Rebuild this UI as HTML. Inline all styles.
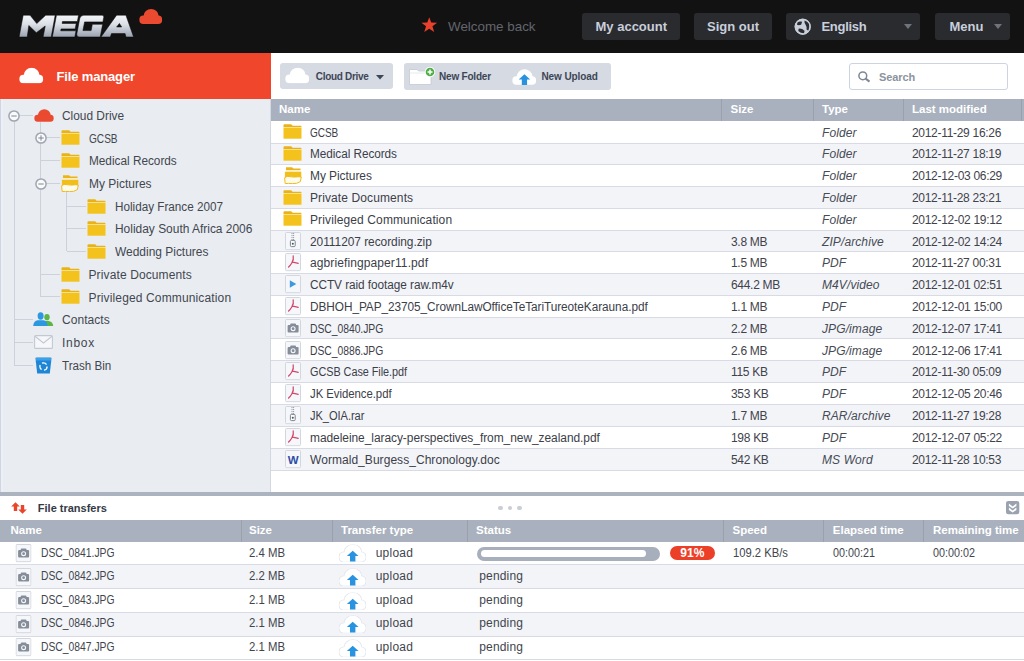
<!DOCTYPE html>
<html><head><meta charset="utf-8">
<style>
html,body{margin:0;padding:0;}
body{width:1024px;height:661px;position:relative;overflow:hidden;background:#ffffff;font-family:"Liberation Sans", sans-serif;}
.a{position:absolute;}
.t{position:absolute;white-space:nowrap;line-height:14px;}
.ic{position:absolute;overflow:visible;}
.row{position:absolute;left:271px;width:753px;}
.sep{position:absolute;left:271px;width:753px;height:1px;background:#d8dbe5;z-index:1;}
.tl{position:absolute;background:#cdd1d9;}
.topbtn{position:absolute;top:12.5px;height:27px;background:#2a2b2f;border-radius:3px;}
.toptext{position:absolute;font-weight:bold;font-size:13px;color:#c8cfdb;line-height:14px;white-space:nowrap;}
.fname{font-size:12px;color:#3b4049;letter-spacing:-0.05px;}
.fsize{font-size:12px;color:#3f434c;letter-spacing:-0.3px;}
.ftype{font-size:12px;color:#464b55;font-style:italic;letter-spacing:0.1px;}
.fdate{font-size:12px;color:#3f434c;letter-spacing:-0.3px;}
.stext{font-size:12px;color:#42474f;}
.hd{position:absolute;font-weight:bold;font-size:11.5px;color:#ffffff;line-height:14px;white-space:nowrap;}
.trtext{font-size:12px;color:#41454d;}
.pbar{position:absolute;width:183px;height:14px;border-radius:7px;background:#a7afbc;}
.pin{position:absolute;left:3.5px;top:3.2px;width:165px;height:7.5px;border-radius:4px;background:#ffffff;}
.badge{position:absolute;width:45.5px;height:14.3px;border-radius:7px;background:#ec3f27;color:#fff;font-weight:bold;font-size:12px;line-height:14.3px;text-align:center;}
</style></head><body>
<svg width="0" height="0" style="position:absolute"><defs>
<linearGradient id="megag" x1="0" y1="0" x2="0" y2="1">
<stop offset="0" stop-color="#f3f5f9"/><stop offset="0.4" stop-color="#dde1e8"/><stop offset="0.7" stop-color="#bcc2cd"/><stop offset="1" stop-color="#9aa2b0"/>
</linearGradient>

<symbol id="folder" viewBox="0 0 19 15">
  <path d="M0.5 1.2 Q0.5 0.3 1.4 0.3 L8.2 0.3 L9.6 1.8 L17.6 1.8 Q18.5 1.8 18.5 2.7 L18.5 3.2 L0.5 3.2 Z" fill="#e9b318"/>
  <rect x="0.5" y="3.1" width="18" height="0.9" fill="#fbe08a"/>
  <rect x="0.5" y="4" width="18" height="10.7" fill="#f3c21d"/>
</symbol>
<symbol id="folderopen" viewBox="0 0 18 17">
  <path d="M2 0.3 H8 L9.5 1.5 H16.5 V3.2 H2 Z" fill="#ebb51a"/>
  <rect x="1.8" y="3.2" width="14.8" height="1.6" fill="#fcf0c4"/>
  <rect x="0.9" y="4.8" width="16.4" height="6" fill="#f1bf1c"/>
  <path d="M0.6 10.8 Q3 8.6 6 9.6 Q9.5 10.4 12.5 9.9 Q15.3 9.4 17.3 10.2 L16.3 14.6 Q13 17 8.5 16.6 Q4 16.2 1.2 16.6 Z" fill="#fffbec" stroke="#efbc1b" stroke-width="1"/>
</symbol>
<symbol id="page" viewBox="0 0 16 19">
  <rect x="0.5" y="0.5" width="15" height="17" rx="1" fill="#f6f7fa" stroke="#d2d6dd" stroke-width="1"/>
  <rect x="0.8" y="17" width="14.4" height="1.2" fill="#d9dde4"/>
</symbol>
<symbol id="cloud" viewBox="0 0 26 17">
  <ellipse cx="13.4" cy="8" rx="8.3" ry="7.6"/><rect x="0.4" y="7.6" width="25.2" height="9.2" rx="4.3"/>
</symbol>

</defs></svg>

<!-- top bar -->
<div class="a" style="left:0;top:0;width:1024px;height:53px;background:#121212"></div>
<svg class="ic" style="left:0;top:0" width="170" height="53" viewBox="0 0 170 53">
  <g fill="url(#megag)" stroke="#060606" stroke-width="0.5">
 <g transform="translate(7.05,0) skewX(-10.75)">
  <path d="M19.1 37 L19 15.2 L25.9 15.2 L34.2 23.6 L41.5 15.2 L51 15.2 L51.2 37 L43.1 37 L43.1 26 L35.5 32.7 L26.6 25.5 L27.2 37 Z"/>
  <path d="M52.3 15.2 H74.4 V21.5 H59.5 V23.4 H73.6 V28.9 H59.5 V30.8 H74.8 V37 H52.3 Z"/>
  <path d="M79.7 15.2 H98 Q100 15.2 100 17.2 V21.9 H81.7 V30.6 H89.9 V24.3 H100.2 V37 H79.7 Q76.2 37 76.2 33.5 V18.7 Q76.2 15.2 79.7 15.2 Z"/>
 </g>
  <path d="M101 37 L116.6 15.2 L125.9 15.2 L133.6 37 L126 37 L125.1 33.6 L111.5 33.6 L110.3 37 Z M116.6 27 L121.7 27 L119.4 23.4 Z" fill-rule="evenodd"/>
 </g>
</svg>
<svg class="ic" style="left:139px;top:7.7px" width="23.5" height="16.8" viewBox="0 0 26 17"><use href="#cloud" fill="#ea4a2f"/></svg>

<svg class="ic" style="left:421.2px;top:16.5px" width="16.5" height="15.5" viewBox="0 0 16 15"><path d="M8 0.3 L9.9 5.4 L15.6 5.5 L11.1 8.9 L12.8 14.6 L8 11.3 L3.2 14.6 L4.9 8.9 L0.4 5.5 L6.1 5.4 Z" fill="#e8412c"/></svg>
<div class="a" style="left:448px;top:19.6px;font-size:13.4px;line-height:14px;color:#62666d;white-space:nowrap">Welcome back</div>

<div class="topbtn" style="left:582px;width:98px"></div>
<div class="toptext" style="left:595.5px;top:19.5px">My account</div>
<div class="topbtn" style="left:693.5px;width:78.5px"></div>
<div class="toptext" style="left:707px;top:19.5px">Sign out</div>
<div class="topbtn" style="left:786px;width:134px"></div>
<svg class="ic" style="left:793.6px;top:17.6px" width="17.4" height="17.4" viewBox="0 0 18 18"><circle cx="9" cy="9" r="8.3" fill="#c8cfda"/><g fill="#2b2c30"><path d="M3.6 4.6 Q6 3 8.4 4 L7.4 6.9 Q5.3 7.8 3.1 7.1 Z"/><path d="M10.8 2.6 Q14 3.2 15.6 6.3 Q16.3 10 14.9 13.2 L13 12 Q13.4 9 12 7.1 Q10.6 5.2 10.8 2.6 Z"/><path d="M4.8 11 Q8.3 10.6 10.9 13.2 L10.4 15.8 Q6.8 15.6 4.4 13.4 Z"/></g><circle cx="9" cy="9" r="7.9" fill="none" stroke="#c8cfda" stroke-width="1"/></svg>
<div class="toptext" style="left:821.5px;top:19.5px;letter-spacing:-0.3px">English</div>
<svg class="ic" style="left:904px;top:24px" width="8" height="5" viewBox="0 0 8 5"><path d="M0 0 L8 0 L4 5 Z" fill="#6e737c"/></svg>
<div class="topbtn" style="left:934.5px;width:75.5px"></div>
<div class="toptext" style="left:949.5px;top:19.5px">Menu</div>
<svg class="ic" style="left:994px;top:24px" width="8" height="5" viewBox="0 0 8 5"><path d="M0 0 L8 0 L4 5 Z" fill="#6e737c"/></svg>

<!-- left header -->
<div class="a" style="left:0;top:53px;width:271px;height:45.5px;background:#ef462c"></div>
<svg class="ic" style="left:18.5px;top:67px" width="24.5" height="17" viewBox="0 0 26 17"><use href="#cloud" fill="#ffffff"/></svg>
<div class="a" style="left:56.5px;top:69.5px;font-weight:bold;font-size:13px;line-height:14px;color:#ffffff;white-space:nowrap;letter-spacing:-0.15px">File manager</div>

<!-- sidebar -->
<div class="a" style="left:0;top:98.5px;width:271px;height:393.5px;background:#e9ecf1"></div>
<div class="a" style="left:0;top:98.5px;width:1px;height:393.5px;background:#d0d5e0"></div><div class="a" style="left:1px;top:98.5px;width:2px;height:393.5px;background:#eceff8"></div>
<div class="a" style="left:270px;top:98.5px;width:1px;height:393.5px;background:#d3d7df"></div>
<div class="tl" style="left:13.5px;top:121.1px;width:1px;height:244.0px"></div>
<div class="tl" style="left:40.0px;top:122.1px;width:1px;height:174.8px"></div>
<div class="tl" style="left:66.1px;top:189.3px;width:1px;height:62.2px"></div>
<div class="tl" style="left:14.0px;top:114.6px;width:19.0px;height:1px"></div>
<svg class="ic" style="left:8.0px;top:109.7px" width="12" height="12" viewBox="0 0 12 12"><circle cx="6" cy="6" r="5.1" fill="#f9fafc" stroke="#9fa6b1" stroke-width="1.5"/><path d="M3.3 6 H8.7" stroke="#7f8692" stroke-width="1"/></svg>
<svg class="ic" style="left:34px;top:108.6px" width="20" height="13" viewBox="0 0 26 17"><use href="#cloud" fill="#ea4a2f"/></svg>
<div class="t stext" style="left:62.0px;top:108.8px;transform:scaleX(0.9905);transform-origin:0 50%;">Cloud Drive</div>
<div class="tl" style="left:40.5px;top:137.3px;width:19.0px;height:1px"></div>
<svg class="ic" style="left:34.5px;top:132.4px" width="12" height="12" viewBox="0 0 12 12"><circle cx="6" cy="6" r="5.1" fill="#f9fafc" stroke="#9fa6b1" stroke-width="1.5"/><path d="M3.3 6 H8.7" stroke="#7f8692" stroke-width="1"/><path d="M6 3.3 V8.7" stroke="#7f8692" stroke-width="1"/></svg>
<svg class="ic" style="left:60.5px;top:130px" width="19" height="15" viewBox="0 0 19 15"><use href="#folder"/></svg>
<div class="t stext" style="left:88.5px;top:131.5px;transform:scaleX(0.8412);transform-origin:0 50%;">GCSB</div>
<div class="tl" style="left:40.5px;top:160.1px;width:19.0px;height:1px"></div>
<svg class="ic" style="left:60.5px;top:153px" width="19" height="15" viewBox="0 0 19 15"><use href="#folder"/></svg>
<div class="t stext" style="left:88.5px;top:154.3px;transform:scaleX(0.9820);transform-origin:0 50%;">Medical Records</div>
<div class="tl" style="left:40.5px;top:182.8px;width:19.0px;height:1px"></div>
<svg class="ic" style="left:34.5px;top:177.9px" width="12" height="12" viewBox="0 0 12 12"><circle cx="6" cy="6" r="5.1" fill="#f9fafc" stroke="#9fa6b1" stroke-width="1.5"/><path d="M3.3 6 H8.7" stroke="#7f8692" stroke-width="1"/></svg>
<svg class="ic" style="left:61.0px;top:175.2px" width="18" height="17" viewBox="0 0 18 17"><use href="#folderopen"/></svg>
<div class="t stext" style="left:88.5px;top:177.0px;transform:scaleX(0.9984);transform-origin:0 50%;">My Pictures</div>
<div class="tl" style="left:66.6px;top:205.5px;width:19.4px;height:1px"></div>
<svg class="ic" style="left:87.0px;top:199px" width="19" height="15" viewBox="0 0 19 15"><use href="#folder"/></svg>
<div class="t stext" style="left:115.0px;top:199.7px;transform:scaleX(0.9757);transform-origin:0 50%;">Holiday France 2007</div>
<div class="tl" style="left:66.6px;top:228.2px;width:19.4px;height:1px"></div>
<svg class="ic" style="left:87.0px;top:221px" width="19" height="15" viewBox="0 0 19 15"><use href="#folder"/></svg>
<div class="t stext" style="left:115.0px;top:222.4px;transform:scaleX(0.9949);transform-origin:0 50%;">Holiday South Africa 2006</div>
<div class="tl" style="left:66.6px;top:251.0px;width:19.4px;height:1px"></div>
<svg class="ic" style="left:87.0px;top:244px" width="19" height="15" viewBox="0 0 19 15"><use href="#folder"/></svg>
<div class="t stext" style="left:115.0px;top:245.2px;transform:scaleX(0.9957);transform-origin:0 50%;">Wedding Pictures</div>
<div class="tl" style="left:40.5px;top:273.7px;width:19.0px;height:1px"></div>
<svg class="ic" style="left:60.5px;top:267px" width="19" height="15" viewBox="0 0 19 15"><use href="#folder"/></svg>
<div class="t stext" style="left:88.5px;top:267.9px;letter-spacing:0.119px;">Private Documents</div>
<div class="tl" style="left:40.5px;top:296.4px;width:19.0px;height:1px"></div>
<svg class="ic" style="left:60.5px;top:289px" width="19" height="15" viewBox="0 0 19 15"><use href="#folder"/></svg>
<div class="t stext" style="left:88.5px;top:290.6px;letter-spacing:0.139px;">Privileged Communication</div>
<div class="tl" style="left:14.0px;top:319.2px;width:19.0px;height:1px"></div>
<svg class="ic" style="left:33px;top:311.7px" width="21" height="14" viewBox="0 0 21 14"><ellipse cx="14" cy="5.2" rx="2.7" ry="3.1" fill="#5cb547"/><path d="M10 13.9 Q10.3 9.6 13 9 L15.5 9 Q19.8 9.6 20.2 13.9 Z" fill="#5cb547"/><ellipse cx="7.6" cy="4" rx="3" ry="3.7" fill="#2b98df"/><path d="M0.2 13.9 Q0.5 8.8 4.8 8.2 L10.4 8.2 Q14.4 8.8 14.6 13.9 Z" fill="#2b98df"/></svg>
<div class="t stext" style="left:62.0px;top:313.4px;letter-spacing:0.043px;">Contacts</div>
<div class="tl" style="left:14.0px;top:341.9px;width:19.0px;height:1px"></div>
<svg class="ic" style="left:34px;top:335.4px" width="19" height="14" viewBox="0 0 19 14"><rect x="0.6" y="0.6" width="17.8" height="12.8" rx="1" fill="#f6f7fa" stroke="#c3c9d3" stroke-width="1.1"/><path d="M1 1.2 L9.5 8 L18 1.2" fill="none" stroke="#c3c9d3" stroke-width="1.1"/></svg>
<div class="t stext" style="left:62.0px;top:336.1px;letter-spacing:0.700px;">Inbox</div>
<div class="tl" style="left:14.0px;top:364.6px;width:19.0px;height:1px"></div>
<svg class="ic" style="left:35px;top:356.8px" width="17" height="17" viewBox="0 0 17 17"><path d="M0.5 1.5 Q0.5 0.5 1.5 0.5 L15.5 0.5 Q16.5 0.5 16.5 1.5 L14.8 16.5 L2.2 16.5 Z" fill="#1f86d6"/><rect x="1" y="1" width="15" height="2.5" fill="#3aa0ea"/><circle cx="8.5" cy="9.5" r="3.6" fill="none" stroke="#ffffff" stroke-width="1.3" stroke-dasharray="5 2.5"/></svg>
<div class="t stext" style="left:62.0px;top:358.8px;transform:scaleX(0.9686);transform-origin:0 50%;">Trash Bin</div>

<!-- toolbar -->
<div class="a" style="left:280px;top:63px;width:113px;height:26px;background:#d5dae3;border-radius:3px"></div>
<svg class="ic" style="left:284.8px;top:67.2px" width="24.5" height="16.8" viewBox="0 0 26 17"><use href="#cloud" fill="#ffffff"/></svg>
<div class="a" style="left:315.8px;top:71.2px;font-weight:bold;font-size:10px;line-height:12px;color:#3d4656;white-space:nowrap;letter-spacing:-0.3px">Cloud Drive</div>
<svg class="ic" style="left:376.3px;top:74.8px" width="8" height="4.5" viewBox="0 0 8 4.5"><path d="M0 0 L8 0 L4 4.5 Z" fill="#3d4656"/></svg>

<div class="a" style="left:403.5px;top:63px;width:207.5px;height:26.5px;background:#d5dae3;border-radius:3px"></div>
<svg class="ic" style="left:409px;top:66px" width="28" height="19" viewBox="0 0 28 19"><path d="M0.5 3.5 L8 3.5 L9.5 5 L22 5 L22 18.5 L0.5 18.5 Z" fill="#ffffff" stroke="#c4c9d2" stroke-width="0.8"/><path d="M0.5 7 L22 7" stroke="#e2e5ea" stroke-width="0.8"/><circle cx="21" cy="6" r="5.2" fill="#ffffff"/><circle cx="21" cy="6" r="4.3" fill="#4fae46"/><path d="M21 3.5 V8.5 M18.5 6 H23.5" stroke="#ffffff" stroke-width="1.5"/></svg>
<div class="a" style="left:439px;top:71.2px;font-weight:bold;font-size:10px;line-height:12px;color:#3d4656;white-space:nowrap;letter-spacing:-0.2px">New Folder</div>
<svg class="ic" style="left:511.5px;top:67.5px" width="24.5" height="18" viewBox="0 0 26 17"><use href="#cloud" fill="#ffffff"/><path d="M13.2 5.6 L19.3 11.2 L16 11.2 L16 17 L10.4 17 L10.4 11.2 L7.1 11.2 Z" fill="#2a93e0"/></svg>
<div class="a" style="left:541.5px;top:71.2px;font-weight:bold;font-size:10px;line-height:12px;color:#3d4656;white-space:nowrap;letter-spacing:-0.1px">New Upload</div>

<div class="a" style="left:849px;top:63.3px;width:157px;height:24.5px;border:1px solid #ccd4e3;border-radius:3px;background:#fff"></div>
<svg class="ic" style="left:857.5px;top:71px" width="13" height="11" viewBox="0 0 13 11"><circle cx="4.8" cy="4.8" r="3.9" fill="none" stroke="#7f8795" stroke-width="1.5"/><path d="M7.6 7.6 L11.5 10.6" stroke="#7f8795" stroke-width="2"/></svg>
<div class="a" style="left:879px;top:70px;font-weight:bold;font-size:11px;line-height:14px;color:#8b93a0;white-space:nowrap;letter-spacing:-0.1px">Search</div>

<!-- file table header -->
<div class="a" style="left:271px;top:98.7px;width:753px;height:22.5px;background:#a9b1be"></div>
<div class="a" style="left:721px;top:98.7px;width:1px;height:22.5px;background:#99a1ae"></div>
<div class="a" style="left:812.5px;top:98.7px;width:1px;height:22.5px;background:#99a1ae"></div>
<div class="a" style="left:903px;top:98.7px;width:1px;height:22.5px;background:#99a1ae"></div>
<div class="a" style="left:1020.5px;top:98.7px;width:1px;height:22.5px;background:#99a1ae"></div>
<div class="hd" style="left:279px;top:102.3px">Name</div>
<div class="hd" style="left:730.5px;top:102.3px">Size</div>
<div class="hd" style="left:822px;top:102.3px">Type</div>
<div class="hd" style="left:912px;top:102.3px">Last modified</div>

<div class="row" style="top:121px;height:22px;background:#ffffff"></div>
<div class="sep" style="top:143px"></div>
<svg class="ic" style="left:283px;top:124px" width="19" height="15" viewBox="0 0 19 15"><use href="#folder"/></svg>
<div class="t fname" style="left:310px;top:125.60px;transform:scaleX(0.8353);transform-origin:0 50%;">GCSB</div>
<div class="t ftype" style="left:822px;top:125.60px">Folder</div>
<div class="t fdate" style="left:912px;top:125.60px">2012-11-29 16:26</div>
<div class="row" style="top:144px;height:20px;background:#f3f4f8"></div>
<div class="sep" style="top:164px"></div>
<svg class="ic" style="left:283px;top:146px" width="19" height="15" viewBox="0 0 19 15"><use href="#folder"/></svg>
<div class="t fname" style="left:310px;top:147.40px;transform:scaleX(0.9809);transform-origin:0 50%;">Medical Records</div>
<div class="t ftype" style="left:822px;top:147.40px">Folder</div>
<div class="t fdate" style="left:912px;top:147.40px">2012-11-27 18:19</div>
<div class="row" style="top:165px;height:21px;background:#ffffff"></div>
<div class="sep" style="top:186px"></div>
<svg class="ic" style="left:283.5px;top:167.2px" width="18" height="17" viewBox="0 0 18 17"><use href="#folderopen"/></svg>
<div class="t fname" style="left:310px;top:169.20px;transform:scaleX(0.9952);transform-origin:0 50%;">My Pictures</div>
<div class="t ftype" style="left:822px;top:169.20px">Folder</div>
<div class="t fdate" style="left:912px;top:169.20px">2012-12-03 06:29</div>
<div class="row" style="top:187px;height:21px;background:#f3f4f8"></div>
<div class="sep" style="top:208px"></div>
<svg class="ic" style="left:283px;top:190px" width="19" height="15" viewBox="0 0 19 15"><use href="#folder"/></svg>
<div class="t fname" style="left:310px;top:191.00px;letter-spacing:0.106px;">Private Documents</div>
<div class="t ftype" style="left:822px;top:191.00px">Folder</div>
<div class="t fdate" style="left:912px;top:191.00px">2012-11-28 23:21</div>
<div class="row" style="top:209px;height:21px;background:#ffffff"></div>
<div class="sep" style="top:230px"></div>
<svg class="ic" style="left:283px;top:211px" width="19" height="15" viewBox="0 0 19 15"><use href="#folder"/></svg>
<div class="t fname" style="left:310px;top:212.80px;letter-spacing:0.117px;">Privileged Communication</div>
<div class="t ftype" style="left:822px;top:212.80px">Folder</div>
<div class="t fdate" style="left:912px;top:212.80px">2012-12-02 19:12</div>
<div class="row" style="top:231px;height:20px;background:#f3f4f8"></div>
<div class="sep" style="top:251px"></div>
<svg class="ic" style="left:284.5px;top:232px" width="16" height="19" viewBox="0 0 16 19"><use href="#page"/><path d="M7 1 V8.2 M8.6 1 V8.2" stroke="#8a909b" stroke-width="0.9" stroke-dasharray="1.1 0.9"/><rect x="5.4" y="8.4" width="4.8" height="6.2" rx="1" fill="#fbfcfd" stroke="#7d848f" stroke-width="1"/><circle cx="7.8" cy="11.8" r="1" fill="#4d535c"/></svg>
<div class="t fname" style="left:310px;top:234.60px;transform:scaleX(0.9935);transform-origin:0 50%;">20111207 recording.zip</div>
<div class="t fsize" style="left:731px;top:234.60px">3.8 MB</div>
<div class="t ftype" style="left:822px;top:234.60px">ZIP/archive</div>
<div class="t fdate" style="left:912px;top:234.60px">2012-12-02 14:24</div>
<div class="row" style="top:252px;height:21px;background:#ffffff"></div>
<div class="sep" style="top:273px"></div>
<svg class="ic" style="left:284.5px;top:253px" width="16" height="19" viewBox="0 0 16 19"><use href="#page"/><path d="M8.2 2.8 Q9 6.5 6.8 10 Q5.3 12.5 3.6 14 M7.3 9.2 Q10 9.6 13.2 10.4" fill="none" stroke="#d1486a" stroke-width="1.25" stroke-linecap="round"/></svg>
<div class="t fname" style="left:310px;top:256.40px;letter-spacing:0.105px;">agbriefingpaper11.pdf</div>
<div class="t fsize" style="left:731px;top:256.40px">1.5 MB</div>
<div class="t ftype" style="left:822px;top:256.40px">PDF</div>
<div class="t fdate" style="left:912px;top:256.40px">2012-11-27 00:31</div>
<div class="row" style="top:274px;height:21px;background:#f3f4f8"></div>
<div class="sep" style="top:295px"></div>
<svg class="ic" style="left:284.5px;top:275px" width="16" height="19" viewBox="0 0 16 19"><use href="#page"/><path d="M4.8 5.3 L11.3 9 L4.8 12.7 Z" fill="#4099dc"/></svg>
<div class="t fname" style="left:310px;top:278.20px;transform:scaleX(0.9830);transform-origin:0 50%;">CCTV raid footage raw.m4v</div>
<div class="t fsize" style="left:731px;top:278.20px">644.2 MB</div>
<div class="t ftype" style="left:822px;top:278.20px">M4V/video</div>
<div class="t fdate" style="left:912px;top:278.20px">2012-12-01 02:51</div>
<div class="row" style="top:296px;height:21px;background:#ffffff"></div>
<div class="sep" style="top:317px"></div>
<svg class="ic" style="left:284.5px;top:297px" width="16" height="19" viewBox="0 0 16 19"><use href="#page"/><path d="M8.2 2.8 Q9 6.5 6.8 10 Q5.3 12.5 3.6 14 M7.3 9.2 Q10 9.6 13.2 10.4" fill="none" stroke="#d1486a" stroke-width="1.25" stroke-linecap="round"/></svg>
<div class="t fname" style="left:310px;top:300.00px;transform:scaleX(0.9836);transform-origin:0 50%;">DBHOH_PAP_23705_CrownLawOfficeTeTariTureoteKarauna.pdf</div>
<div class="t fsize" style="left:731px;top:300.00px">1.1 MB</div>
<div class="t ftype" style="left:822px;top:300.00px">PDF</div>
<div class="t fdate" style="left:912px;top:300.00px">2012-12-01 15:00</div>
<div class="row" style="top:318px;height:20px;background:#f3f4f8"></div>
<div class="sep" style="top:338px"></div>
<svg class="ic" style="left:284.5px;top:319px" width="16" height="19" viewBox="0 0 16 19"><use href="#page"/><g fill="#858d99"><rect x="2.6" y="6" width="11" height="7.5" rx="1"/><rect x="5.2" y="4.6" width="5.8" height="2.5" rx="1"/></g><circle cx="8.1" cy="9.7" r="2.5" fill="#f6f7fa"/><circle cx="8.1" cy="9.7" r="1.4" fill="#858d99"/></svg>
<div class="t fname" style="left:310px;top:321.80px;transform:scaleX(0.8635);transform-origin:0 50%;">DSC_0840.JPG</div>
<div class="t fsize" style="left:731px;top:321.80px">2.2 MB</div>
<div class="t ftype" style="left:822px;top:321.80px">JPG/image</div>
<div class="t fdate" style="left:912px;top:321.80px">2012-12-07 17:41</div>
<div class="row" style="top:339px;height:21px;background:#ffffff"></div>
<div class="sep" style="top:360px"></div>
<svg class="ic" style="left:284.5px;top:341px" width="16" height="19" viewBox="0 0 16 19"><use href="#page"/><g fill="#858d99"><rect x="2.6" y="6" width="11" height="7.5" rx="1"/><rect x="5.2" y="4.6" width="5.8" height="2.5" rx="1"/></g><circle cx="8.1" cy="9.7" r="2.5" fill="#f6f7fa"/><circle cx="8.1" cy="9.7" r="1.4" fill="#858d99"/></svg>
<div class="t fname" style="left:310px;top:343.60px;transform:scaleX(0.8635);transform-origin:0 50%;">DSC_0886.JPG</div>
<div class="t fsize" style="left:731px;top:343.60px">2.6 MB</div>
<div class="t ftype" style="left:822px;top:343.60px">JPG/image</div>
<div class="t fdate" style="left:912px;top:343.60px">2012-12-06 17:41</div>
<div class="row" style="top:361px;height:21px;background:#f3f4f8"></div>
<div class="sep" style="top:382px"></div>
<svg class="ic" style="left:284.5px;top:362px" width="16" height="19" viewBox="0 0 16 19"><use href="#page"/><path d="M8.2 2.8 Q9 6.5 6.8 10 Q5.3 12.5 3.6 14 M7.3 9.2 Q10 9.6 13.2 10.4" fill="none" stroke="#d1486a" stroke-width="1.25" stroke-linecap="round"/></svg>
<div class="t fname" style="left:310px;top:365.40px;transform:scaleX(0.9055);transform-origin:0 50%;">GCSB Case File.pdf</div>
<div class="t fsize" style="left:731px;top:365.40px">115 KB</div>
<div class="t ftype" style="left:822px;top:365.40px">PDF</div>
<div class="t fdate" style="left:912px;top:365.40px">2012-11-30 05:09</div>
<div class="row" style="top:383px;height:21px;background:#ffffff"></div>
<div class="sep" style="top:404px"></div>
<svg class="ic" style="left:284.5px;top:384px" width="16" height="19" viewBox="0 0 16 19"><use href="#page"/><path d="M8.2 2.8 Q9 6.5 6.8 10 Q5.3 12.5 3.6 14 M7.3 9.2 Q10 9.6 13.2 10.4" fill="none" stroke="#d1486a" stroke-width="1.25" stroke-linecap="round"/></svg>
<div class="t fname" style="left:310px;top:387.20px;transform:scaleX(0.9483);transform-origin:0 50%;">JK Evidence.pdf</div>
<div class="t fsize" style="left:731px;top:387.20px">353 KB</div>
<div class="t ftype" style="left:822px;top:387.20px">PDF</div>
<div class="t fdate" style="left:912px;top:387.20px">2012-12-05 20:46</div>
<div class="row" style="top:405px;height:21px;background:#f3f4f8"></div>
<div class="sep" style="top:426px"></div>
<svg class="ic" style="left:284.5px;top:406px" width="16" height="19" viewBox="0 0 16 19"><use href="#page"/><path d="M7 1 V8.2 M8.6 1 V8.2" stroke="#8a909b" stroke-width="0.9" stroke-dasharray="1.1 0.9"/><rect x="5.4" y="8.4" width="4.8" height="6.2" rx="1" fill="#fbfcfd" stroke="#7d848f" stroke-width="1"/><circle cx="7.8" cy="11.8" r="1" fill="#4d535c"/></svg>
<div class="t fname" style="left:310px;top:409.00px;transform:scaleX(0.9237);transform-origin:0 50%;">JK_OIA.rar</div>
<div class="t fsize" style="left:731px;top:409.00px">1.7 MB</div>
<div class="t ftype" style="left:822px;top:409.00px">RAR/archive</div>
<div class="t fdate" style="left:912px;top:409.00px">2012-11-27 19:28</div>
<div class="row" style="top:427px;height:21px;background:#ffffff"></div>
<div class="sep" style="top:448px"></div>
<svg class="ic" style="left:284.5px;top:428px" width="16" height="19" viewBox="0 0 16 19"><use href="#page"/><path d="M8.2 2.8 Q9 6.5 6.8 10 Q5.3 12.5 3.6 14 M7.3 9.2 Q10 9.6 13.2 10.4" fill="none" stroke="#d1486a" stroke-width="1.25" stroke-linecap="round"/></svg>
<div class="t fname" style="left:310px;top:430.80px;transform:scaleX(0.9959);transform-origin:0 50%;">madeleine_laracy-perspectives_from_new_zealand.pdf</div>
<div class="t fsize" style="left:731px;top:430.80px">198 KB</div>
<div class="t ftype" style="left:822px;top:430.80px">PDF</div>
<div class="t fdate" style="left:912px;top:430.80px">2012-12-07 05:22</div>
<div class="row" style="top:449px;height:21px;background:#f3f4f8"></div>
<div class="sep" style="top:470px"></div>
<svg class="ic" style="left:284.5px;top:450px" width="16" height="19" viewBox="0 0 16 19"><use href="#page"/><text x="8" y="13.6" text-anchor="middle" font-family="Liberation Sans" font-weight="bold" font-size="11.5" fill="#2d4ca6" letter-spacing="-0.5">W</text></svg>
<div class="t fname" style="left:310px;top:452.60px;letter-spacing:0.048px;">Wormald_Burgess_Chronology.doc</div>
<div class="t fsize" style="left:731px;top:452.60px">542 KB</div>
<div class="t ftype" style="left:822px;top:452.60px">MS Word</div>
<div class="t fdate" style="left:912px;top:452.60px">2012-11-28 10:53</div>

<!-- divider -->
<div class="a" style="left:0;top:491.8px;width:1024px;height:4.6px;background:#abb3bf"></div>
<!-- transfers header -->
<div class="a" style="left:0;top:496.4px;width:1024px;height:23.5px;background:#ffffff"></div>
<svg class="ic" style="left:11px;top:502px" width="16" height="12" viewBox="0 0 16 12"><path d="M4.5 0.3 L8.8 4.5 L6.2 4.5 L6.2 9 L2.8 9 L2.8 4.5 L0.2 4.5 Z" fill="#ea452c"/><path d="M11.5 11.7 L15.8 7.5 L13.2 7.5 L13.2 3 L9.8 3 L9.8 7.5 L7.2 7.5 Z" fill="#ea452c"/></svg>
<div class="a" style="left:37.8px;top:501px;font-weight:bold;font-size:11px;line-height:14px;color:#333a46;white-space:nowrap">File transfers</div>
<div class="a" style="left:498px;top:505.7px;width:4.8px;height:4.8px;border-radius:50%;background:#c9cdd5"></div>
<div class="a" style="left:507.5px;top:505.7px;width:4.8px;height:4.8px;border-radius:50%;background:#c9cdd5"></div>
<div class="a" style="left:517px;top:505.7px;width:4.8px;height:4.8px;border-radius:50%;background:#c9cdd5"></div>
<svg class="ic" style="left:1006px;top:501.2px" width="13.3" height="13.3" viewBox="0 0 13.3 13.3"><rect x="0" y="0" width="13.3" height="13.3" rx="2.5" fill="#9aa2af"/><path d="M2.9 2.6 L6.65 5.4 L10.4 2.6 L10.4 4.9 L6.65 7.5 L2.9 4.9 Z M2.9 6.6 L6.65 9.4 L10.4 6.6 L10.4 8.9 L6.65 11.4 L2.9 8.9 Z" fill="#ffffff"/></svg>

<!-- transfers table header -->
<div class="a" style="left:0;top:519.8px;width:1024px;height:22px;background:#a9b1be"></div>
<div class="a" style="left:240.5px;top:519.8px;width:1px;height:22px;background:#99a1ae"></div>
<div class="a" style="left:331.5px;top:519.8px;width:1px;height:22px;background:#99a1ae"></div>
<div class="a" style="left:467px;top:519.8px;width:1px;height:22px;background:#99a1ae"></div>
<div class="a" style="left:723.3px;top:519.8px;width:1px;height:22px;background:#99a1ae"></div>
<div class="a" style="left:823px;top:519.8px;width:1px;height:22px;background:#99a1ae"></div>
<div class="a" style="left:923px;top:519.8px;width:1px;height:22px;background:#99a1ae"></div>
<div class="hd" style="left:10.5px;top:523px">Name</div>
<div class="hd" style="left:249px;top:523px">Size</div>
<div class="hd" style="left:341px;top:523px">Transfer type</div>
<div class="hd" style="left:476px;top:523px">Status</div>
<div class="hd" style="left:732.5px;top:523px">Speed</div>
<div class="hd" style="left:832.8px;top:523px">Elapsed time</div>
<div class="hd" style="left:933px;top:523px">Remaining time</div>

<div class="row" style="left:0;width:1024px;top:542px;height:22px;background:#ffffff"></div>
<div class="sep" style="left:0;width:1024px;top:564px"></div>
<svg class="ic" style="left:15px;top:544.1px" width="17" height="19" viewBox="0 0 16 19"><use href="#page"/><g fill="#858d99"><rect x="2.6" y="6" width="11" height="7.5" rx="1"/><rect x="5.2" y="4.6" width="5.8" height="2.5" rx="1"/></g><circle cx="8.1" cy="9.7" r="2.5" fill="#f6f7fa"/><circle cx="8.1" cy="9.7" r="1.4" fill="#858d99"/></svg>
<div class="t trtext" style="left:41px;top:545.5px;transform:scaleX(0.8612);transform-origin:0 50%;">DSC_0841.JPG</div>
<div class="t trtext" style="left:249.4px;top:545.5px;transform:scaleX(0.9474);transform-origin:0 50%;">2.4 MB</div>
<svg class="ic" style="left:339px;top:544.4px" width="27" height="18.5" viewBox="0 0 26 17"><use href="#cloud" fill="#dfe3ea" stroke="#dfe3ea" stroke-width="1.5"/><use href="#cloud" fill="#ffffff"/><path d="M13.2 6 L18.8 11.2 L15.8 11.2 L15.8 16.5 L10.6 16.5 L10.6 11.2 L7.6 11.2 Z" fill="#2a93e0"/></svg>
<div class="t trtext" style="left:375.7px;top:545.5px;letter-spacing:0.240px;">upload</div>
<div class="pbar" style="left:477.4px;top:546.5px"><div class="pin"></div></div>
<div class="badge" style="left:669.6px;top:545.8px">91%</div>
<div class="t trtext" style="left:732.5px;top:545.5px;transform:scaleX(0.9356);transform-origin:0 50%;">109.2 KB/s</div>
<div class="t trtext" style="left:832.8px;top:545.5px;transform:scaleX(0.8979);transform-origin:0 50%;">00:00:21</div>
<div class="t trtext" style="left:932.9px;top:545.5px;transform:scaleX(0.8979);transform-origin:0 50%;">00:00:02</div>
<div class="row" style="left:0;width:1024px;top:565px;height:23px;background:#f3f4f8"></div>
<div class="sep" style="left:0;width:1024px;top:588px"></div>
<svg class="ic" style="left:15px;top:567.6px" width="17" height="19" viewBox="0 0 16 19"><use href="#page"/><g fill="#858d99"><rect x="2.6" y="6" width="11" height="7.5" rx="1"/><rect x="5.2" y="4.6" width="5.8" height="2.5" rx="1"/></g><circle cx="8.1" cy="9.7" r="2.5" fill="#f6f7fa"/><circle cx="8.1" cy="9.7" r="1.4" fill="#858d99"/></svg>
<div class="t trtext" style="left:41px;top:569.0px;transform:scaleX(0.8612);transform-origin:0 50%;">DSC_0842.JPG</div>
<div class="t trtext" style="left:249.4px;top:569.0px;transform:scaleX(0.9474);transform-origin:0 50%;">2.2 MB</div>
<svg class="ic" style="left:339px;top:567.9px" width="27" height="18.5" viewBox="0 0 26 17"><use href="#cloud" fill="#dfe3ea" stroke="#dfe3ea" stroke-width="1.5"/><use href="#cloud" fill="#ffffff"/><path d="M13.2 6 L18.8 11.2 L15.8 11.2 L15.8 16.5 L10.6 16.5 L10.6 11.2 L7.6 11.2 Z" fill="#2a93e0"/></svg>
<div class="t trtext" style="left:375.7px;top:569.0px;letter-spacing:0.240px;">upload</div>
<div class="t trtext" style="left:479.3px;top:569.0px;letter-spacing:0.150px;">pending</div>
<div class="row" style="left:0;width:1024px;top:589px;height:23px;background:#ffffff"></div>
<div class="sep" style="left:0;width:1024px;top:612px"></div>
<svg class="ic" style="left:15px;top:591.2px" width="17" height="19" viewBox="0 0 16 19"><use href="#page"/><g fill="#858d99"><rect x="2.6" y="6" width="11" height="7.5" rx="1"/><rect x="5.2" y="4.6" width="5.8" height="2.5" rx="1"/></g><circle cx="8.1" cy="9.7" r="2.5" fill="#f6f7fa"/><circle cx="8.1" cy="9.7" r="1.4" fill="#858d99"/></svg>
<div class="t trtext" style="left:41px;top:592.6px;transform:scaleX(0.8612);transform-origin:0 50%;">DSC_0843.JPG</div>
<div class="t trtext" style="left:249.4px;top:592.6px;transform:scaleX(0.9474);transform-origin:0 50%;">2.1 MB</div>
<svg class="ic" style="left:339px;top:591.5px" width="27" height="18.5" viewBox="0 0 26 17"><use href="#cloud" fill="#dfe3ea" stroke="#dfe3ea" stroke-width="1.5"/><use href="#cloud" fill="#ffffff"/><path d="M13.2 6 L18.8 11.2 L15.8 11.2 L15.8 16.5 L10.6 16.5 L10.6 11.2 L7.6 11.2 Z" fill="#2a93e0"/></svg>
<div class="t trtext" style="left:375.7px;top:592.6px;letter-spacing:0.240px;">upload</div>
<div class="t trtext" style="left:479.3px;top:592.6px;letter-spacing:0.150px;">pending</div>
<div class="row" style="left:0;width:1024px;top:613px;height:23px;background:#f3f4f8"></div>
<div class="sep" style="left:0;width:1024px;top:636px"></div>
<svg class="ic" style="left:15px;top:614.8px" width="17" height="19" viewBox="0 0 16 19"><use href="#page"/><g fill="#858d99"><rect x="2.6" y="6" width="11" height="7.5" rx="1"/><rect x="5.2" y="4.6" width="5.8" height="2.5" rx="1"/></g><circle cx="8.1" cy="9.7" r="2.5" fill="#f6f7fa"/><circle cx="8.1" cy="9.7" r="1.4" fill="#858d99"/></svg>
<div class="t trtext" style="left:41px;top:616.2px;transform:scaleX(0.8612);transform-origin:0 50%;">DSC_0846.JPG</div>
<div class="t trtext" style="left:249.4px;top:616.2px;transform:scaleX(0.9474);transform-origin:0 50%;">2.1 MB</div>
<svg class="ic" style="left:339px;top:615.1px" width="27" height="18.5" viewBox="0 0 26 17"><use href="#cloud" fill="#dfe3ea" stroke="#dfe3ea" stroke-width="1.5"/><use href="#cloud" fill="#ffffff"/><path d="M13.2 6 L18.8 11.2 L15.8 11.2 L15.8 16.5 L10.6 16.5 L10.6 11.2 L7.6 11.2 Z" fill="#2a93e0"/></svg>
<div class="t trtext" style="left:375.7px;top:616.2px;letter-spacing:0.240px;">upload</div>
<div class="t trtext" style="left:479.3px;top:616.2px;letter-spacing:0.150px;">pending</div>
<div class="row" style="left:0;width:1024px;top:637px;height:22px;background:#ffffff"></div>
<div class="sep" style="left:0;width:1024px;top:659px"></div>
<svg class="ic" style="left:15px;top:638.3px" width="17" height="19" viewBox="0 0 16 19"><use href="#page"/><g fill="#858d99"><rect x="2.6" y="6" width="11" height="7.5" rx="1"/><rect x="5.2" y="4.6" width="5.8" height="2.5" rx="1"/></g><circle cx="8.1" cy="9.7" r="2.5" fill="#f6f7fa"/><circle cx="8.1" cy="9.7" r="1.4" fill="#858d99"/></svg>
<div class="t trtext" style="left:41px;top:639.7px;transform:scaleX(0.8612);transform-origin:0 50%;">DSC_0847.JPG</div>
<div class="t trtext" style="left:249.4px;top:639.7px;transform:scaleX(0.9474);transform-origin:0 50%;">2.1 MB</div>
<svg class="ic" style="left:339px;top:638.6px" width="27" height="18.5" viewBox="0 0 26 17"><use href="#cloud" fill="#dfe3ea" stroke="#dfe3ea" stroke-width="1.5"/><use href="#cloud" fill="#ffffff"/><path d="M13.2 6 L18.8 11.2 L15.8 11.2 L15.8 16.5 L10.6 16.5 L10.6 11.2 L7.6 11.2 Z" fill="#2a93e0"/></svg>
<div class="t trtext" style="left:375.7px;top:639.7px;letter-spacing:0.240px;">upload</div>
<div class="t trtext" style="left:479.3px;top:639.7px;letter-spacing:0.150px;">pending</div>
</body></html>
